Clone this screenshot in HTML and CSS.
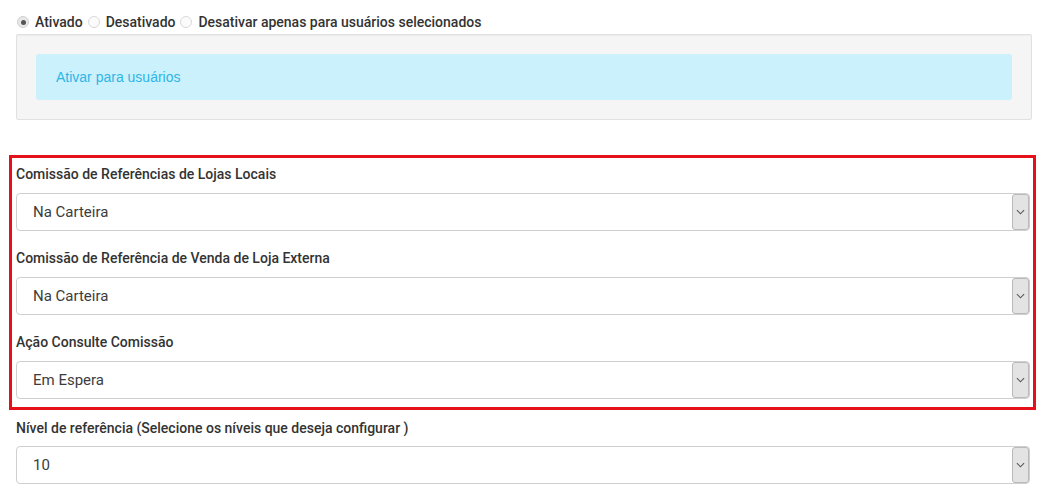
FILE: index.html
```html
<!DOCTYPE html>
<html lang="pt">
<head>
<meta charset="utf-8">
<title>Configurações</title>
<link rel="stylesheet" href="styles.css">
</head>
<body>
<div class="page">
  <div class="radio-row">
    <label class="radio"><span class="dot checked"></span>Ativado</label>
    <label class="radio"><span class="dot"></span>Desativado</label>
    <label class="radio"><span class="dot"></span>Desativar apenas para usuários selecionados</label>
  </div>
  <div class="well">
    <div class="info">Ativar para usuários</div>
  </div>

  <div class="highlight">
    <div class="field">
      <div class="label">Comissão de Referências de Lojas Locais</div>
      <div class="select"><span class="value">Na Carteira</span><span class="arrow"><svg width="10" height="6" viewBox="0 0 10 6"><path d="M1 1 L5 5 L9 1" fill="none" stroke="#555" stroke-width="1.2"/></svg></span></div>
    </div>
    <div class="field">
      <div class="label">Comissão de Referência de Venda de Loja Externa</div>
      <div class="select"><span class="value">Na Carteira</span><span class="arrow"><svg width="10" height="6" viewBox="0 0 10 6"><path d="M1 1 L5 5 L9 1" fill="none" stroke="#555" stroke-width="1.2"/></svg></span></div>
    </div>
    <div class="field">
      <div class="label">Ação Consulte Comissão</div>
      <div class="select"><span class="value">Em Espera</span><span class="arrow"><svg width="10" height="6" viewBox="0 0 10 6"><path d="M1 1 L5 5 L9 1" fill="none" stroke="#555" stroke-width="1.2"/></svg></span></div>
    </div>
  </div>

  <div class="field standalone">
    <div class="label">Nível de referência (Selecione os níveis que deseja configurar )</div>
    <div class="select"><span class="value">10</span><span class="arrow"><svg width="10" height="6" viewBox="0 0 10 6"><path d="M1 1 L5 5 L9 1" fill="none" stroke="#555" stroke-width="1.2"/></svg></span></div>
  </div>
</div>
</body>
</html>
```
FILE: styles.css
```css
* { box-sizing: border-box; }
html, body { margin: 0; padding: 0; background: #fff; }
body {
  font-family: Roboto, "Liberation Sans", Arial, sans-serif;
  color: #333;
  width: 1044px;
  height: 500px;
  overflow: hidden;
}
.page { padding: 12px 0 0 16px; width: 1032px; }

.radio-row {
  display: flex;
  align-items: center;
  height: 20px;
  font-size: 14px;
  font-weight: 500;
  color: #333;
}
.radio { display: flex; align-items: center; margin-right: 4px; }
.dot {
  width: 12px; height: 12px;
  border-radius: 50%;
  border: 1px solid #dadada;
  background: #fbfbfb;
  margin: 0 6px 0 1px;
  display: inline-flex; align-items: center; justify-content: center;
}
.dot.checked { background: #e8e8e8; border-color: #d0d0d0; }
.dot.checked::after {
  content: ""; width: 5px; height: 5px; border-radius: 50%; background: #555;
}

.well {
  margin-top: 2px;
  border: 1px solid #e1e1e1;
  border-radius: 2px;
  background: #f5f5f5;
  padding: 19px;
  box-shadow: inset 0 1px 1px rgba(0,0,0,0.04);
}
.info {
  background: #cbf1fd;
  color: #2fb5e6;
  font-family: "Liberation Sans", Arial, sans-serif;
  font-size: 14px;
  line-height: 18px;
  padding: 14px 20px;
  border-radius: 3px;
}

.highlight {
  margin: 35px 0 0 -7px;
  width: 1027px;
  border: 3px solid #e4101a;
  padding: 6px 3px 8px 4px;
}
.field + .field { margin-top: 17px; }
.label {
  font-size: 14px;
  font-weight: 500;
  line-height: 20px;
  color: #333;
  margin-bottom: 9px;
}
.select {
  display: flex;
  justify-content: space-between;
  align-items: stretch;
  height: 38px;
  border: 1px solid #cfcfcf;
  border-radius: 4px;
  background: #fff;
}
.value {
  font-size: 15px;
  color: #3c3c3c;
  line-height: 36px;
  padding-left: 16px;
}
.arrow {
  width: 17px;
  background: #e3e3e3;
  border: 1px solid #b9b9b9;
  border-radius: 3px;
  display: flex; align-items: center; justify-content: center;
}
.arrow svg { width: 9px; height: 6px; }

.standalone { margin-top: 8px; width: 1014px; }
.standalone .label { margin-bottom: 8px; }
.highlight .select { width: 1014px; }
```
